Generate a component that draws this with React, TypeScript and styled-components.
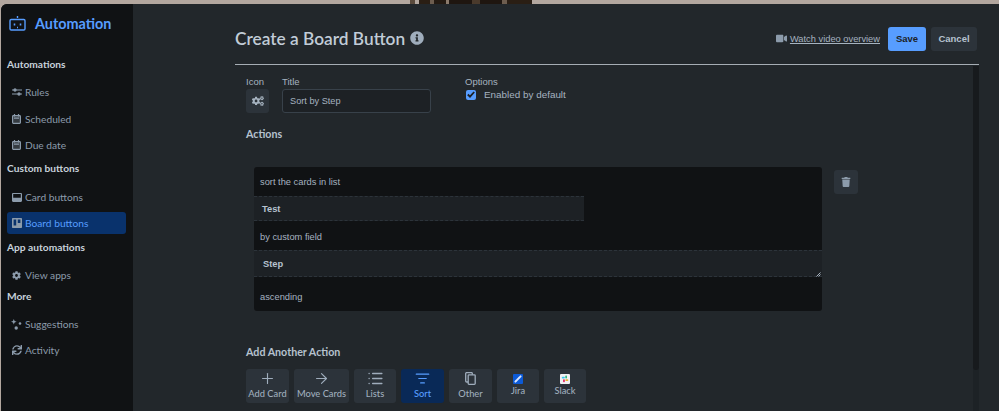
import React from "react";
import styled, { createGlobalStyle } from "styled-components";
import { FaCog, FaCogs, FaInfoCircle, FaSync, FaTrash, FaVideo } from "react-icons/fa";
import { ArrowRight, List, ListFilter, Plus } from "lucide-react";

const Global = createGlobalStyle`
  html, body { margin: 0; padding: 0; height: 411px; overflow: hidden; background: #b3a79f; }
  #root { height: 411px; }
  * { box-sizing: border-box; }
`;

const Shell = styled.div`
  width: 999px;
  height: 411px;
  display: flex;
  flex-direction: column;
  overflow: hidden;
`;

const Wallpaper = styled.div`
  height: 4px;
  flex: none;
  background:
    linear-gradient(90deg, #5a4a3c 0 5px, #b3a79f 5px 9px, #2a1e14 9px 20px, #6d5d4f 20px 24px, #241a12 24px 36px, #8a7a6c 36px 39px, #1f1610 39px 62px, #4a3a2c 62px 70px, #1f1610 70px 92px, #6d5d4f 92px 97px, #2a1e14 97px 122px) 410px 0 / 122px 100% no-repeat,
    #b3a79f;
`;

const Window = styled.div`
  flex: 1;
  min-height: 0;
  display: flex;
  margin-left: 1px;
  border-top-left-radius: 6px;
  background: #22272b;
  overflow: hidden;
`;

const Sidebar = styled.aside`
  width: 132px;
  flex: none;
  background: #101214;
  padding: 0 7px 0 6px;
  font-family: Lato, sans-serif;
`;

const Brand = styled.div`
  height: 38px;
  display: flex;
  align-items: center;
  gap: 9px;
  margin: 0 0 2px 2px;
  color: #579dff;
  font-size: 14.4px;
  font-weight: 700;
`;

const NavHeading = styled.div<{ $gap?: number; $after?: number }>`
  height: 16px;
  line-height: 16px;
  margin-top: ${(p) => p.$gap ?? 3}px;
  margin-bottom: ${(p) => p.$after ?? 9}px;
  color: #c7d1db;
  font-size: 10.2px;
  font-weight: 700;
  white-space: nowrap;
`;

const NavItem = styled.div<{ $active?: boolean; $tall?: boolean }>`
  height: 22px;
  margin-bottom: ${(p) => (p.$tall ? 5 : 4)}px;
  padding-left: 3px;
  display: flex;
  align-items: center;
  gap: 3px;
  border-radius: 3px;
  font-size: 10.2px;
  color: ${(p) => (p.$active ? "#579dff" : "#8c9bab")};
  background: ${(p) => (p.$active ? "#09326c" : "transparent")};
`;

const NavIconBox = styled.span`
  width: 11px;
  height: 11px;
  display: inline-flex;
  align-items: center;
  justify-content: center;
  margin-left: 1px;
  flex: none;
  color: #8c9bab;
`;

const Main = styled.main`
  flex: 1;
  min-width: 0;
  padding: 0 20px 0 102px;
  display: flex;
  flex-direction: column;
`;

const Header = styled.header`
  height: 61px;
  flex: none;
  display: flex;
  align-items: center;
  padding-top: 8px;
  border-bottom: 1px solid #a6adb4;
`;

const PageTitle = styled.h1`
  margin: 0;
  display: flex;
  align-items: center;
  gap: 5px;
  color: #c1ccd7;
  font: 600 17.3px Lato, sans-serif;
`;

const HeaderActions = styled.div`
  margin-left: auto;
  margin-right: 2px;
  padding-top: 1px;
  display: flex;
  align-items: center;
  font: 9.3px "Liberation Sans", sans-serif;
`;

const VideoLink = styled.a`
  display: flex;
  align-items: center;
  gap: 3px;
  margin-right: 8px;
  color: #a6b3c0;
  text-decoration: underline;
`;

const TopButton = styled.button<{ $primary?: boolean }>`
  height: 24px;
  width: ${(p) => (p.$primary ? 38 : 46)}px;
  margin-left: ${(p) => (p.$primary ? 0 : 5)}px;
  padding: 0;
  border: 0;
  border-radius: 3px;
  font: 700 9.5px "Liberation Sans", sans-serif;
  color: ${(p) => (p.$primary ? "#1d2125" : "#b6c2cf")};
  background: ${(p) => (p.$primary ? "#579dff" : "#2c333a")};
`;

const Body = styled.div`
  flex: 1;
  min-height: 0;
  display: flex;
`;

const Form = styled.div`
  flex: 1;
  min-width: 0;
  padding: 10px 0 0 11px;
`;

const Scrollbar = styled.div`
  width: 6px;
  flex: none;
  margin-top: 1px;
  background: #1d2226;
`;

const Thumb = styled.div`
  height: 304px;
  border-radius: 0 0 3px 3px;
  background: #171a1d;
`;

const FieldRow = styled.div`
  display: flex;
  align-items: flex-start;
  height: 49px;
`;

const Field = styled.div<{ $width: number }>`
  width: ${(p) => p.$width}px;
  flex: none;
`;

const FieldLabel = styled.div`
  height: 14px;
  color: #a6b3c0;
  font: 9.5px/13px "Liberation Sans", sans-serif;
`;

const IconPicker = styled.div`
  width: 23px;
  height: 24px;
  display: flex;
  align-items: center;
  justify-content: center;
  border-radius: 3px;
  background: #2c333a;
  color: #a6b3c0;
`;

const TitleInput = styled.div`
  width: 149px;
  height: 24px;
  padding-left: 7px;
  display: flex;
  align-items: center;
  border: 1px solid #38414a;
  border-radius: 3px;
  background: #1d2125;
  color: #a6b3c0;
  font: 9.2px "Liberation Sans", sans-serif;
`;

const CheckRow = styled.div`
  display: flex;
  align-items: center;
  gap: 8px;
  margin-left: 1px;
  color: #a6b3c0;
  font: 9.9px "Liberation Sans", sans-serif;
`;

const Check = styled.span`
  width: 10px;
  height: 10px;
  display: inline-flex;
  align-items: center;
  justify-content: center;
  border-radius: 2px;
  background: #579dff;
`;

const Heading = styled.h2<{ $top?: number; $bottom?: number }>`
  margin: ${(p) => p.$top ?? 0}px 0 ${(p) => p.$bottom ?? 0}px;
  height: 16px;
  color: #b6c2cf;
  font: 700 10.7px/16px Lato, sans-serif;
`;

const ActionLine = styled.div`
  display: flex;
  align-items: flex-start;
  gap: 12px;
  margin: 25px 0 0 8px;
`;

const ActionPanel = styled.div`
  width: 568px;
  height: 144px;
  border-radius: 3px;
  background: #101214;
  overflow: hidden;
  position: relative;
`;

const Sentence = styled.div<{ $height: number; $pad?: number }>`
  height: ${(p) => p.$height}px;
  padding: ${(p) => p.$pad ?? 0}px 0 0 6px;
  display: flex;
  align-items: center;
  color: #a6b3c0;
  font: 9.3px "Liberation Sans", sans-serif;
`;

const Slot = styled.div<{ $height: number; $width?: number; $indent: number }>`
  height: ${(p) => p.$height}px;
  width: ${(p) => (p.$width ? `${p.$width}px` : "100%")};
  padding-left: ${(p) => p.$indent}px;
  display: flex;
  align-items: center;
  border-top: 1px dashed #2c333a;
  border-bottom: 1px dashed #2c333a;
  background: #1d2125;
  color: #b6c2cf;
  font: 700 9.3px "Liberation Sans", sans-serif;
`;

const Grip = styled.svg`
  position: absolute;
  right: 1px;
  top: 105px;
`;

const TrashButton = styled.button`
  width: 24px;
  height: 24px;
  margin-top: 3px;
  padding: 0;
  display: flex;
  align-items: center;
  justify-content: center;
  border: 0;
  border-radius: 3px;
  background: #2c333a;
  color: #8c9bab;
`;

const Palette = styled.div`
  display: flex;
  gap: 5px;
`;

const PaletteButton = styled.button<{ $active?: boolean; $width: number }>`
  width: ${(p) => p.$width}px;
  height: 34px;
  padding: 0;
  display: flex;
  flex-direction: column;
  align-items: center;
  border: 0;
  border-radius: 3px;
  background: ${(p) => (p.$active ? "#092957" : "#2c333a")};
  color: ${(p) => (p.$active ? "#579dff" : "#9fadbc")};
  font: 500 9.3px/13px Lato, sans-serif;
  white-space: nowrap;
`;

const PaletteIcon = styled.span<{ $brand?: boolean }>`
  height: ${(p) => (p.$brand ? 15 : 18)}px;
  padding-top: ${(p) => (p.$brand ? 4 : 1)}px;
  display: flex;
  align-items: center;
  justify-content: center;
  flex: none;
`;

const RobotIcon = () => (
  <svg width="17" height="15" viewBox="0 0 17 15" fill="none" stroke="#579dff" strokeWidth="1.4">
    <rect x="1" y="3.500" width="15" height="10.500" rx="1.200" />
    <path d="M8.500 0v2" />
    <path d="M5.500 7.500v2M11.500 7.500v2" strokeWidth="1.600" />
    <path d="M8 11.500h1" />
  </svg>
);

const SlidersIcon = () => (
  <svg width="10" height="8" viewBox="0 0 10 8" fill="none" stroke="currentColor" strokeWidth="1.100">
    <path d="M0 2h10M0 6h10" />
    <circle cx="3" cy="2" r="1.100" fill="currentColor" />
    <circle cx="7" cy="6" r="1.100" fill="currentColor" />
  </svg>
);

const CalendarIcon = () => (
  <svg width="9" height="10" viewBox="0 0 9 10" fill="none" stroke="currentColor" strokeWidth="1.200">
    <rect x=".6" y="1.600" width="7.800" height="7.800" rx=".8" fill="currentColor" fillOpacity=".3" />
    <path d="M2.500 0v2.400M6.500 0v2.400" />
    <path d="M2 4.200h5" strokeWidth="1.300" />
  </svg>
);

const CardIcon = () => (
  <svg width="10" height="9" viewBox="0 0 10 9">
    <path fill="currentColor" fillRule="evenodd" d="M1.200 0h7.600C9.500 0 10 .5 10 1.200v6.600C10 8.500 9.500 9 8.800 9H1.200C.5 9 0 8.500 0 7.800V1.200C0 .5.5 0 1.200 0ZM1.200 1.100v3.700h7.600V1.100Z" />
  </svg>
);

const BoardIcon = () => (
  <svg width="10" height="10" viewBox="0 0 10 10">
    <path fill="currentColor" fillRule="evenodd" d="M1 0h8c.6 0 1 .4 1 1v8c0 .6-.4 1-1 1H1c-.6 0-1-.4-1-1V1c0-.6.4-1 1-1Zm.6 1.500v6h2.600v-6Zm4.200 0v3.500h2.600V1.500Z" />
  </svg>
);

const SparkIcon = () => (
  <svg width="11" height="11" viewBox="0 0 11 11" fill="currentColor">
    <path d="M2.800 0l.8 2L5.600 2.800l-2 .8-.8 2-.8-2-2-.8 2-.8Z" />
    <circle cx="9" cy="4.500" r="1.300" />
    <circle cx="5.200" cy="9" r="1.700" />
  </svg>
);

const CopyIcon = () => (
  <svg width="11" height="13" viewBox="0 0 11 13" fill="none" stroke="currentColor" strokeWidth="1.300">
    <rect x="3.200" y="2.800" width="7" height="9.500" rx=".8" />
    <path d="M3.200 10H1.600A.9.9 0 0 1 .7 9.100V1.500A.9.9 0 0 1 1.600.6h4.800a.9.900 0 0 1 .9.900v1.300" />
  </svg>
);

const JiraIcon = () => (
  <svg width="10" height="10" viewBox="0 0 10 10">
    <rect width="10" height="10" rx="1" fill="#0c5ad6" />
    <path d="M2.400 7.600 7.600 2.400" stroke="#d6e4ff" strokeWidth="2" strokeLinecap="round" strokeDasharray="1.500 .6" />
  </svg>
);

const SlackIcon = () => (
  <svg width="10" height="10" viewBox="0 0 10 10">
    <rect width="10" height="10" rx="1" fill="#f1f2f4" />
    <rect x="1.800" y="2.800" width="3" height="1.700" rx=".8" fill="#36c5f0" />
    <rect x="5.300" y="1.600" width="1.700" height="3" rx=".8" fill="#2eb67d" />
    <rect x="5.300" y="5.300" width="3" height="1.700" rx=".8" fill="#ecb22e" />
    <rect x="3.100" y="5.300" width="1.700" height="3" rx=".8" fill="#e01e5a" />
  </svg>
);

const paletteItems = [
  { label: "Add Card", width: 43, icon: <Plus size={17} strokeWidth={1.6} /> },
  { label: "Move Cards", width: 55, icon: <ArrowRight size={17} strokeWidth={1.6} /> },
  { label: "Lists", width: 42, icon: <List size={17} strokeWidth={2} /> },
  { label: "Sort", width: 43, active: true, icon: <ListFilter size={15} strokeWidth={1.8} /> },
  { label: "Other", width: 43, icon: <CopyIcon /> },
  { label: "Jira", width: 42, brand: true, icon: <JiraIcon /> },
  { label: "Slack", width: 42, brand: true, icon: <SlackIcon /> },
];

export default function App() {
  return (
    <Shell>
      <Global />
      <Wallpaper />
      <Window>
        <Sidebar>
          <Brand>
            <RobotIcon />
            Automation
          </Brand>
          <NavHeading $gap={14}>Automations</NavHeading>
          <NavItem $tall><NavIconBox><SlidersIcon /></NavIconBox>Rules</NavItem>
          <NavItem><NavIconBox><CalendarIcon /></NavIconBox>Scheduled</NavItem>
          <NavItem><NavIconBox><CalendarIcon /></NavIconBox>Due date</NavItem>
          <NavHeading $gap={4} $after={10}>Custom buttons</NavHeading>
          <NavItem><NavIconBox><CardIcon /></NavIconBox>Card buttons</NavItem>
          <NavItem $active><NavIconBox><BoardIcon /></NavIconBox>Board buttons</NavItem>
          <NavHeading $gap={5}>App automations</NavHeading>
          <NavItem><NavIconBox><FaCog size={9} /></NavIconBox>View apps</NavItem>
          <NavHeading $gap={-2}>More</NavHeading>
          <NavItem><NavIconBox><SparkIcon /></NavIconBox>Suggestions</NavItem>
          <NavItem><NavIconBox><FaSync size={10} /></NavIconBox>Activity</NavItem>
        </Sidebar>
        <Main>
          <Header>
            <PageTitle>
              Create a Board Button
              <FaInfoCircle size={14} color="#9fadbc" />
            </PageTitle>
            <HeaderActions>
              <VideoLink>
                <FaVideo size={11} color="#8c9bab" />
                Watch video overview
              </VideoLink>
              <TopButton $primary>Save</TopButton>
              <TopButton>Cancel</TopButton>
            </HeaderActions>
          </Header>
          <Body>
            <Form>
              <FieldRow>
                <Field $width={36}>
                  <FieldLabel>Icon</FieldLabel>
                  <IconPicker><FaCogs size={12} /></IconPicker>
                </Field>
                <Field $width={183}>
                  <FieldLabel>Title</FieldLabel>
                  <TitleInput>Sort by Step</TitleInput>
                </Field>
                <Field $width={200}>
                  <FieldLabel>Options</FieldLabel>
                  <CheckRow>
                    <Check>
                      <svg width="8" height="7" viewBox="0 0 8 7" fill="none" stroke="#1d2125" strokeWidth="1.800">
                        <path d="M.8 3.500 3 5.600 7.200 1" />
                      </svg>
                    </Check>
                    Enabled by default
                  </CheckRow>
                </Field>
              </FieldRow>
              <Heading $top={2}>Actions</Heading>
              <ActionLine>
                <ActionPanel>
                  <Sentence $height={29}>sort the cards in list</Sentence>
                  <Slot $height={25} $width={330} $indent={8}>Test</Slot>
                  <Sentence $height={29} $pad={2}>by custom field</Sentence>
                  <Slot $height={27} $indent={9}>Step</Slot>
                  <Sentence $height={34} $pad={6}>ascending</Sentence>
                  <Grip width="5" height="5" viewBox="0 0 5 5" fill="none" stroke="#b6c2cf" strokeWidth=".9">
                    <path d="M.5 4.500 4.500.5M2.500 4.500l2-2" />
                  </Grip>
                </ActionPanel>
                <TrashButton><FaTrash size={10} /></TrashButton>
              </ActionLine>
              <Heading $top={33} $bottom={9}>Add Another Action</Heading>
              <Palette>
                {paletteItems.map((item) => (
                  <PaletteButton key={item.label} $active={item.active} $width={item.width}>
                    <PaletteIcon $brand={item.brand}>{item.icon}</PaletteIcon>
                    {item.label}
                  </PaletteButton>
                ))}
              </Palette>
            </Form>
            <Scrollbar><Thumb /></Scrollbar>
          </Body>
        </Main>
      </Window>
    </Shell>
  );
}
